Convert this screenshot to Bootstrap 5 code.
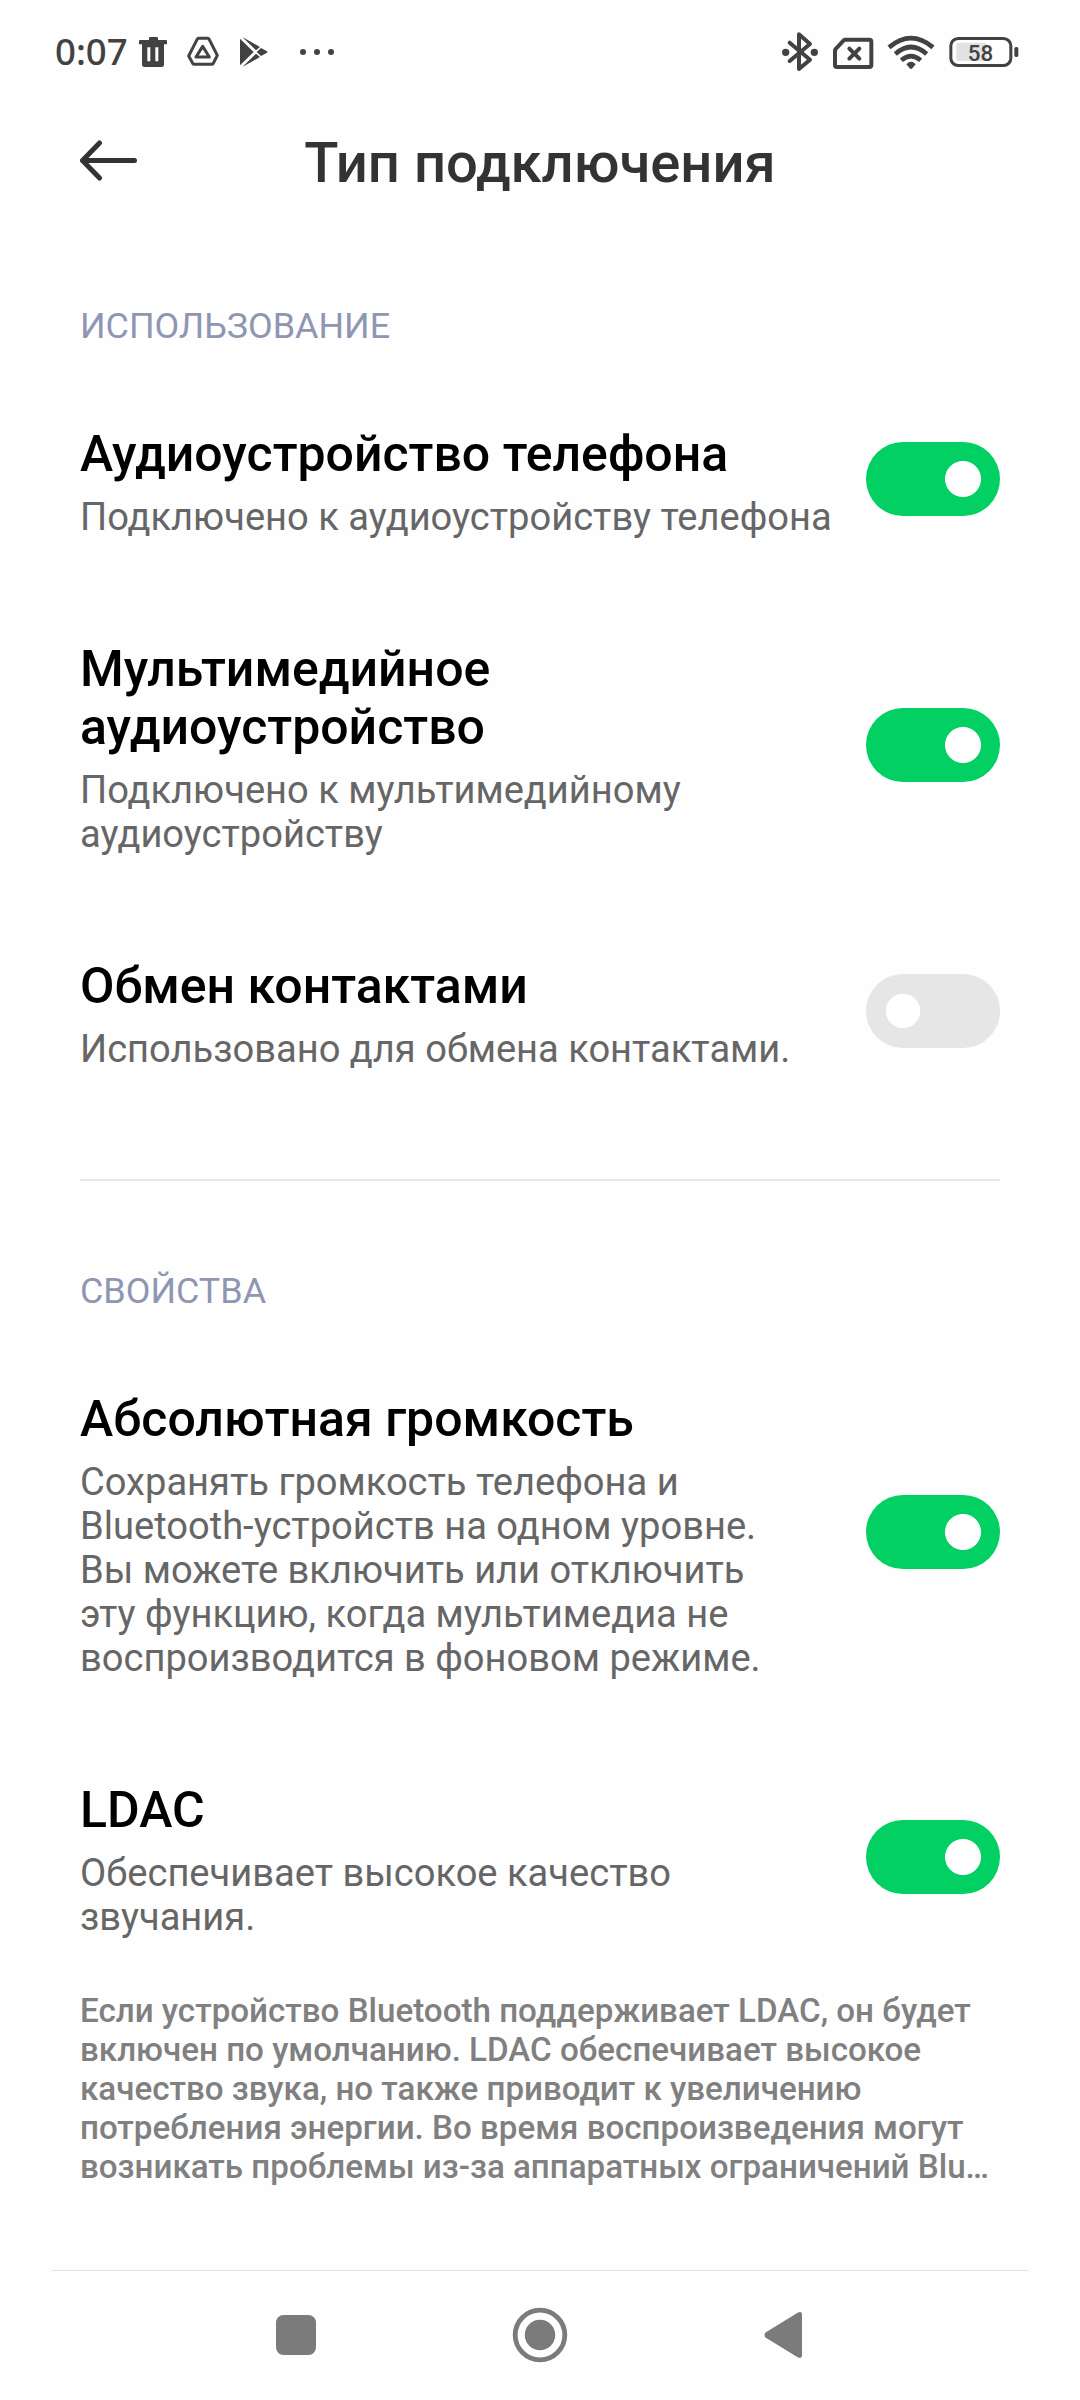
<!DOCTYPE html>
<html lang="ru">
<head>
<meta charset="utf-8">
<meta name="viewport" content="width=device-width, initial-scale=1">
<title>Тип подключения</title>
<link rel="stylesheet" href="https://cdn.jsdelivr.net/npm/bootstrap@5.3.0/dist/css/bootstrap.min.css">
<style>
  body { width: 1080px; height: 2400px; background: #fefefe; color: #000; font-family: Roboto, "Noto Sans", sans-serif; overflow: hidden; }
  svg { display: block; flex: none; }
  .statusbar { height: 90px; padding: 20px 58px 0 55px; color: #424242; }
  .clock { width: 80px; font: 500 36.6px/62px "Noto Sans", sans-serif; }
  .topbar { height: 146px; padding: 0 80px; }
  .topbar h1 { font-size: 56.2px; font-weight: 500; line-height: 66px; color: #333; padding-right: 60px; }
  .content { padding: 69px 80px 0; }
  .section-label { font-size: 35.9px; line-height: 42px; color: #8f96b2; margin-bottom: 72px; font-weight: 400; }
  .setting + .setting { margin-top: 95px; }
  .setting-text { padding-top: 6px; }
  .setting h3 { font-size: 50px; line-height: 58px; font-weight: 500; margin-bottom: 12px; }
  .setting p { font-size: 38.1px; line-height: 44px; color: #666; }
  .divider { height: 2px; background: #e5e5e5; margin: 108px 0 89px; }
  .note { font-size: 33.15px; line-height: 39px; font-weight: 500; color: #808080; margin-top: 52px; }
  .form-switch .form-check-input.toggle { width: 134px; height: 74px; margin: 0; border: 0; border-radius: 37px; background-color: #e6e6e6; opacity: 1;
    background-image: radial-gradient(circle at 37px 37px, #fff 16.8px, transparent 17.5px); background-position: 0 0; background-size: 100% 100%; }
  .form-switch .form-check-input.toggle:checked { background-color: #03d062;
    background-image: radial-gradient(circle at 97px 37px, #fff 17.6px, transparent 18.4px); background-position: 0 0; }
  .navkeys { height: 130px; margin: 0 52px; border-top: 1px solid #e2e2e2; color: #7b7b7b; }
</style>
<script src="https://cdn.jsdelivr.net/npm/bootstrap@5.3.0/dist/js/bootstrap.bundle.min.js"></script>
</head>
<body class="d-flex flex-column">

<div class="statusbar d-flex justify-content-between">
  <div class="d-flex">
    <div class="clock">0:07</div>
    <svg width="40" height="70" viewBox="285 0 120 210" fill="currentColor">
      <path fill-rule="evenodd" d="M327 60v-5q0-4 4-4h19q4 0 4 4v5h24q3 0 3 4v9h-9v61q0 7-7 7h-52q-7 0-7-7V73h-9v-9q0-4 3-4zM322 82v42h9V82zM346 82v42h9V82z"/>
    </svg>
    <svg width="55" height="70" viewBox="405 0 165 210" fill="none" stroke="currentColor" stroke-width="9" stroke-linejoin="round">
      <path d="M476 55h27q3 0 5 4l24 47-12 24q-2 3-5 3h-52q-3 0-5-3l-12-22 25-49q2-4 5-4z"/><path d="M488 79l20 32h-40z"/>
    </svg>
    <svg width="50" height="70" viewBox="570 0 150 210" fill="currentColor">
      <path d="M600 56l41 40-41 40zM607 51l53 30-12 10zM607 141l53-30-12-10zM663 84l17 9q4 3 0 6l-17 9-13-12z"/>
    </svg>
    <svg width="60" height="70" viewBox="720 0 180 210" fill="currentColor"><circle cx="789" cy="96" r="9"/><circle cx="831" cy="96" r="9"/><circle cx="873" cy="96" r="9"/></svg>
  </div>
  <div class="d-flex">
    <svg width="50" height="70" viewBox="45 0 150 210" fill="none" stroke="currentColor" stroke-width="12" stroke-linecap="round" stroke-linejoin="round">
      <path d="M89 68l61 51-33 28V43l33 29-61 51"/><g fill="currentColor" stroke="none"><circle cx="77" cy="97" r="11"/><circle cx="163" cy="97" r="11"/></g>
    </svg>
    <svg width="55" height="70" viewBox="195 0 165 210" fill="none" stroke="currentColor" stroke-width="12" stroke-linecap="round" stroke-linejoin="round">
      <path d="M256 59h72q6 0 6 6v70q0 6-6 6h-97q-6 0-6-6V92q0-3 2-5l24-26q2-2 5-2z"/><path d="M268 86l30 30m0-30l-30 30"/>
    </svg>
    <svg width="61.670" height="70" viewBox="360 0 185 210" fill="none" stroke="currentColor" stroke-width="14">
      <path d="M387 82Q453 27 519 82M406 102Q453 60 500 102M424 121Q453 96 482 121"/><path d="M439 133q14-15 28 0l-10 12q-4 4-8 0z" fill="currentColor" stroke="none"/>
    </svg>
    <svg width="80" height="70" viewBox="545 0 240 210">
      <rect x="588" y="68" width="92" height="55" rx="8" fill="#e2e2e2"/><rect x="571.500" y="55.500" width="180" height="81" rx="22" fill="none" stroke="currentColor" stroke-width="9"/><rect x="762" y="81" width="12" height="30" rx="5" fill="currentColor"/>
      <text x="660.500" y="123" text-anchor="middle" font-family="Roboto" font-weight="500" font-size="67" fill="currentColor">58</text>
    </svg>
  </div>
</div>

<header class="topbar d-flex align-items-center">
  <svg width="60" height="60" viewBox="80 133 60 60" fill="none" stroke="#333" stroke-width="5" stroke-linecap="round" stroke-linejoin="round"><path d="M134.500 160.500H82.500M99.500 143L82.500 160.500L99.500 178"/></svg>
  <h1 class="flex-fill text-center mb-0">Тип подключения</h1>
</header>

<main class="content flex-grow-1">
  <h2 class="section-label">ИСПОЛЬЗОВАНИЕ</h2>
  <div class="setting d-flex align-items-center justify-content-between">
    <div class="setting-text"><h3>Аудиоустройство телефона</h3><p class="mb-0">Подключено к аудиоустройству телефона</p></div>
    <div class="form-check form-switch p-0 m-0 d-flex"><input class="form-check-input toggle" type="checkbox" role="switch" checked></div>
  </div>
  <div class="setting d-flex align-items-center justify-content-between">
    <div class="setting-text"><h3>Мультимедийное<br>аудиоустройство</h3><p class="mb-0">Подключено к мультимедийному<br>аудиоустройству</p></div>
    <div class="form-check form-switch p-0 m-0 d-flex"><input class="form-check-input toggle" type="checkbox" role="switch" checked></div>
  </div>
  <div class="setting d-flex align-items-center justify-content-between">
    <div class="setting-text"><h3>Обмен контактами</h3><p class="mb-0">Использовано для обмена контактами.</p></div>
    <div class="form-check form-switch p-0 m-0 d-flex"><input class="form-check-input toggle" type="checkbox" role="switch"></div>
  </div>

  <div class="divider"></div>

  <h2 class="section-label">СВОЙСТВА</h2>
  <div class="setting d-flex align-items-center justify-content-between">
    <div class="setting-text"><h3>Абсолютная громкость</h3><p class="mb-0">Сохранять громкость телефона и<br>Bluetooth-устройств на одном уровне.<br>Вы можете включить или отключить<br>эту функцию, когда мультимедиа не<br>воспроизводится в фоновом режиме.</p></div>
    <div class="form-check form-switch p-0 m-0 d-flex"><input class="form-check-input toggle" type="checkbox" role="switch" checked></div>
  </div>
  <div class="setting d-flex align-items-center justify-content-between">
    <div class="setting-text"><h3>LDAC</h3><p class="mb-0">Обеспечивает высокое качество<br>звучания.</p></div>
    <div class="form-check form-switch p-0 m-0 d-flex"><input class="form-check-input toggle" type="checkbox" role="switch" checked></div>
  </div>
  <p class="note mb-0 text-nowrap">Если устройство Bluetooth поддерживает LDAC, он будет<br>включен по умолчанию. LDAC обеспечивает высокое<br>качество звука, но также приводит к увеличению<br>потребления энергии. Во время воспроизведения могут<br>возникать проблемы из-за аппаратных ограничений Blu…</p>
</main>

<nav class="navkeys d-flex justify-content-center">
  <svg width="976" height="129" viewBox="52 2271 976 129" fill="currentColor">
    <rect x="276" y="2315" width="40" height="40" rx="7.500"/>
    <circle cx="540" cy="2335" r="24.800" fill="none" stroke="currentColor" stroke-width="4.800"/><circle cx="540" cy="2335" r="15.200"/>
    <path d="M765.500 2332.500L798 2312.500Q802 2311 802 2314.500V2355.500Q802 2359 798 2357.500L765.500 2337.500Q763.500 2335 765.500 2332.500z"/>
  </svg>
</nav>
</body>
</html>
